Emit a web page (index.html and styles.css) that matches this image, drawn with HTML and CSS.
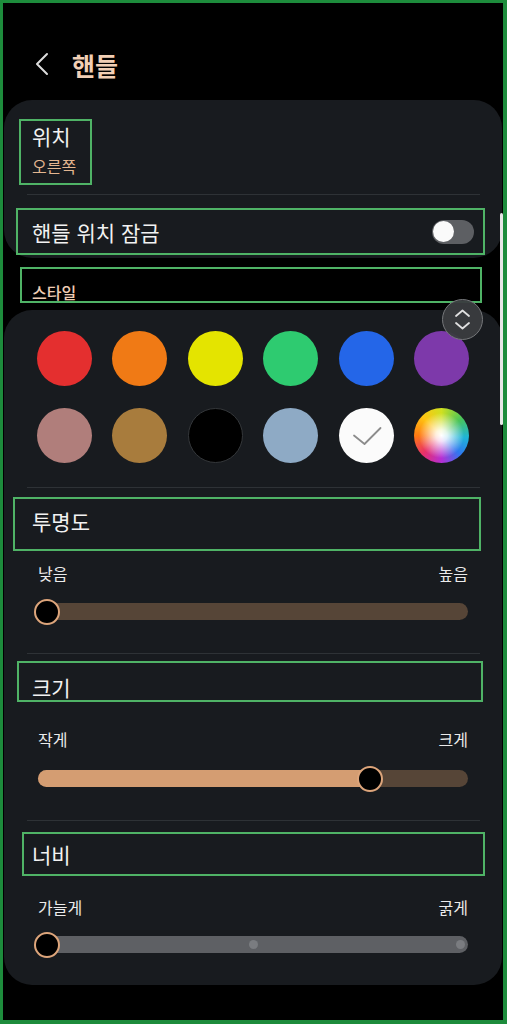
FILE: index.html
```html
<!DOCTYPE html>
<html lang="ko">
<head>
<meta charset="utf-8">
<title>핸들</title>
<link rel="stylesheet" href="styles.css">
</head>
<body>
<div class="frame">
  <header class="topbar">
    <svg class="back" width="14" height="24" viewBox="0 0 14 24"><polyline points="12,2 2,12 12,22" fill="none" stroke="#dcdcdc" stroke-width="2" stroke-linecap="round" stroke-linejoin="round"/></svg>
    <h1 class="title">핸들</h1>
  </header>

  <section class="card card-top">
    <div class="anno pos-item">
      <div class="item-title">위치</div>
      <div class="item-sub">오른쪽</div>
    </div>
    <div class="divider"></div>
    <div class="anno lock-row">
      <span class="item-title">핸들 위치 잠금</span>
      <span class="toggle"><span class="knob"></span></span>
    </div>
  </section>

  <div class="anno style-label"><span>스타일</span></div>

  <section class="card card-style">
    <div class="swatches">
      <span class="sw" style="background:#e42f2f"></span>
      <span class="sw" style="background:#f07a15"></span>
      <span class="sw" style="background:#e4e400"></span>
      <span class="sw" style="background:#2ecb70"></span>
      <span class="sw" style="background:#2466e8"></span>
      <span class="sw" style="background:#7d39aa"></span>
      <span class="sw" style="background:#b07e7b"></span>
      <span class="sw" style="background:#a87c3d"></span>
      <span class="sw sw-black"></span>
      <span class="sw" style="background:#8eaac5"></span>
      <span class="sw sw-white"><svg width="55" height="55" viewBox="0 0 55 55"><polyline points="15,27.5 25.5,36 41.5,20" fill="none" stroke="#8c8c8c" stroke-width="1.8" stroke-linecap="round" stroke-linejoin="round"/></svg></span>
      <span class="sw sw-rainbow"></span>
    </div>
    <div class="divider"></div>

    <div class="anno sec-head head-opacity"><span class="item-title">투명도</span></div>
    <div class="range-labels lbl-1"><span>낮음</span><span>높음</span></div>
    <div class="slider sl-1">
      <div class="track track-brown">
        <span class="thumb" style="left:9px"></span>
      </div>
    </div>
    <div class="divider dv-2"></div>

    <div class="anno sec-head head-size"><span class="item-title">크기</span></div>
    <div class="range-labels lbl-2"><span>작게</span><span>크게</span></div>
    <div class="slider sl-2">
      <div class="track track-brown">
        <span class="fill" style="width:332px"></span>
        <span class="thumb" style="left:332px"></span>
      </div>
    </div>
    <div class="divider dv-3"></div>

    <div class="anno sec-head head-width"><span class="item-title">너비</span></div>
    <div class="range-labels lbl-3"><span>가늘게</span><span>굵게</span></div>
    <div class="slider sl-3">
      <div class="track track-gray">
        <span class="dot" style="left:215px"></span>
        <span class="dot" style="left:422px"></span>
        <span class="thumb" style="left:9px"></span>
      </div>
    </div>
  </section>

  <button class="scroll-btn" type="button" aria-label="scroll">
    <svg width="41" height="41" viewBox="0 0 41 41"><polyline points="14,17 20.5,11.5 27,17" fill="none" stroke="#e0e0e0" stroke-width="1.8" stroke-linecap="round" stroke-linejoin="round"/><polyline points="14,24 20.5,29.5 27,24" fill="none" stroke="#e0e0e0" stroke-width="1.8" stroke-linecap="round" stroke-linejoin="round"/></svg>
  </button>
  <div class="scrollbar"></div>
</div>
</body>
</html>
```

FILE: styles.css
```css
* { box-sizing: border-box; }
html, body { margin: 0; padding: 0; background: #000; }
body {
  font-family: "Noto Sans CJK KR", "Noto Sans", sans-serif;
  color: #f2f2f2;
}
.frame {
  position: relative;
  width: 507px;
  height: 1024px;
  background: #000;
  border-style: solid;
  border-color: #1d8c3c;
  border-width: 3px 4px 4px 3px;
  overflow: hidden;
}
.topbar {
  height: 97px;
  display: flex;
  align-items: flex-start;
  padding: 46px 0 0 32px;
}
.back { margin-top: 3px; }
.title {
  margin: 0 0 0 23px;
  font-size: 25px;
  line-height: 32px;
  font-weight: 700;
  color: #f2cfb5;
}
.card {
  margin: 0 1px;
  background: #181b1f;
  border-radius: 28px;
}
.card-top {
  height: 158px;
  padding-top: 19px;
}
.anno { border: 2px solid #4fb366; }
.pos-item {
  margin-left: 15px;
  width: 73px;
  height: 66px;
  padding: 2px 0 0 11px;
}
.item-title {
  font-size: 21px;
  line-height: 26px;
  font-weight: 400;
  color: #f2f2f2;
  white-space: nowrap;
}
.item-sub {
  margin-top: 7px;
  font-size: 16px;
  line-height: 20px;
  color: #e3b690;
  white-space: nowrap;
}
.divider {
  height: 1px;
  background: #2e3236;
  margin: 9px 22px 0 23px;
}
.lock-row {
  margin: 13px 17px 0 12px;
  height: 47px;
  display: flex;
  align-items: center;
  justify-content: space-between;
  padding: 0 9px 0 14px;
}
.toggle {
  width: 42px;
  height: 24px;
  border-radius: 12px;
  background: #5d5f63;
  display: flex;
  align-items: center;
  padding-left: 1px;
}
.knob {
  width: 21px;
  height: 21px;
  border-radius: 50%;
  background: #fafafa;
}
.style-label {
  margin: 9px 21px 0 17px;
  height: 36px;
  padding: 13px 0 0 10px;
  font-size: 16px;
  line-height: 20px;
  font-weight: 500;
  color: #efcdb4;
}
.card-style {
  margin-top: 7px;
  height: 675px;
  padding-top: 21px;
}
.swatches {
  display: grid;
  grid-template-columns: repeat(6, 55px);
  column-gap: 20.6px;
  row-gap: 22px;
  padding-left: 32.5px;
}
.sw {
  display: block;
  width: 55px;
  height: 55px;
  border-radius: 50%;
}
.sw svg { display: block; }
.sw-black { background: #000; border: 1px solid #34373a; }
.sw-white { background: #fbfbfb; }
.sw-rainbow {
  background:
    radial-gradient(circle at 50% 50%, #ffffff 0%, rgba(255,255,255,0.85) 15%, rgba(255,255,255,0) 58%),
    conic-gradient(#cfe020 0deg, #49c45a 50deg, #1fb4d8 95deg, #2f78f0 135deg, #b52fd4 180deg, #e8306a 225deg, #ff7a12 270deg, #ffc512 315deg, #cfe020 360deg);
}
.swatches + .divider { margin-top: 23.5px; }
.sec-head .item-title { display: block; }
.head-opacity {
  margin: 9px 21px 0 9px;
  height: 54px;
  padding: 9px 0 0 17px;
}
.head-size {
  margin: 7px 19px 0 13px;
  height: 41px;
  padding: 11px 0 0 13px;
}
.head-width {
  margin: 11px 17px 0 18px;
  height: 44px;
  padding: 7px 0 0 8px;
}
.range-labels {
  display: flex;
  justify-content: space-between;
  padding: 0 34px;
  font-size: 16px;
  line-height: 20px;
  color: #ebebeb;
}
.lbl-1 { margin-top: 12px; }
.lbl-2 { margin-top: 27px; }
.lbl-3 { margin-top: 21px; }
.slider {
  height: 26px;
  display: flex;
  align-items: center;
  padding: 0 34px;
}
.sl-1 { margin-top: 16px; }
.sl-2 { margin-top: 17px; }
.sl-3 { margin-top: 15px; }
.dv-2, .dv-3 { margin-top: 28px; }
.track {
  position: relative;
  flex: 1;
  height: 17px;
  border-radius: 8.5px;
}
.track-brown { background: #564537; }
.track-gray { background: #5e6064; }
.fill {
  position: absolute;
  left: 0;
  top: 0;
  height: 17px;
  border-radius: 8.5px;
  background: #d49d72;
}
.thumb {
  position: absolute;
  top: 50%;
  width: 26px;
  height: 26px;
  margin: -13px 0 0 -13px;
  border-radius: 50%;
  background: #000;
  border: 2.5px solid #dda57b;
}
.dot {
  position: absolute;
  top: 50%;
  width: 9px;
  height: 9px;
  margin: -4.5px 0 0 -4.5px;
  border-radius: 50%;
  background: #7a7c80;
}
.scroll-btn {
  position: absolute;
  left: 439px;
  top: 296px;
  width: 41px;
  height: 41px;
  padding: 0;
  border-radius: 50%;
  background: rgba(58, 60, 63, 0.95);
  border: 1.5px solid #75777a;
  display: flex;
  align-items: center;
  justify-content: center;
}
.scroll-btn svg { display: block; flex: none; }
.scrollbar {
  position: absolute;
  left: 497px;
  top: 210px;
  width: 3px;
  height: 212px;
  border-radius: 2px;
  background: #e6e6e6;
}
```
